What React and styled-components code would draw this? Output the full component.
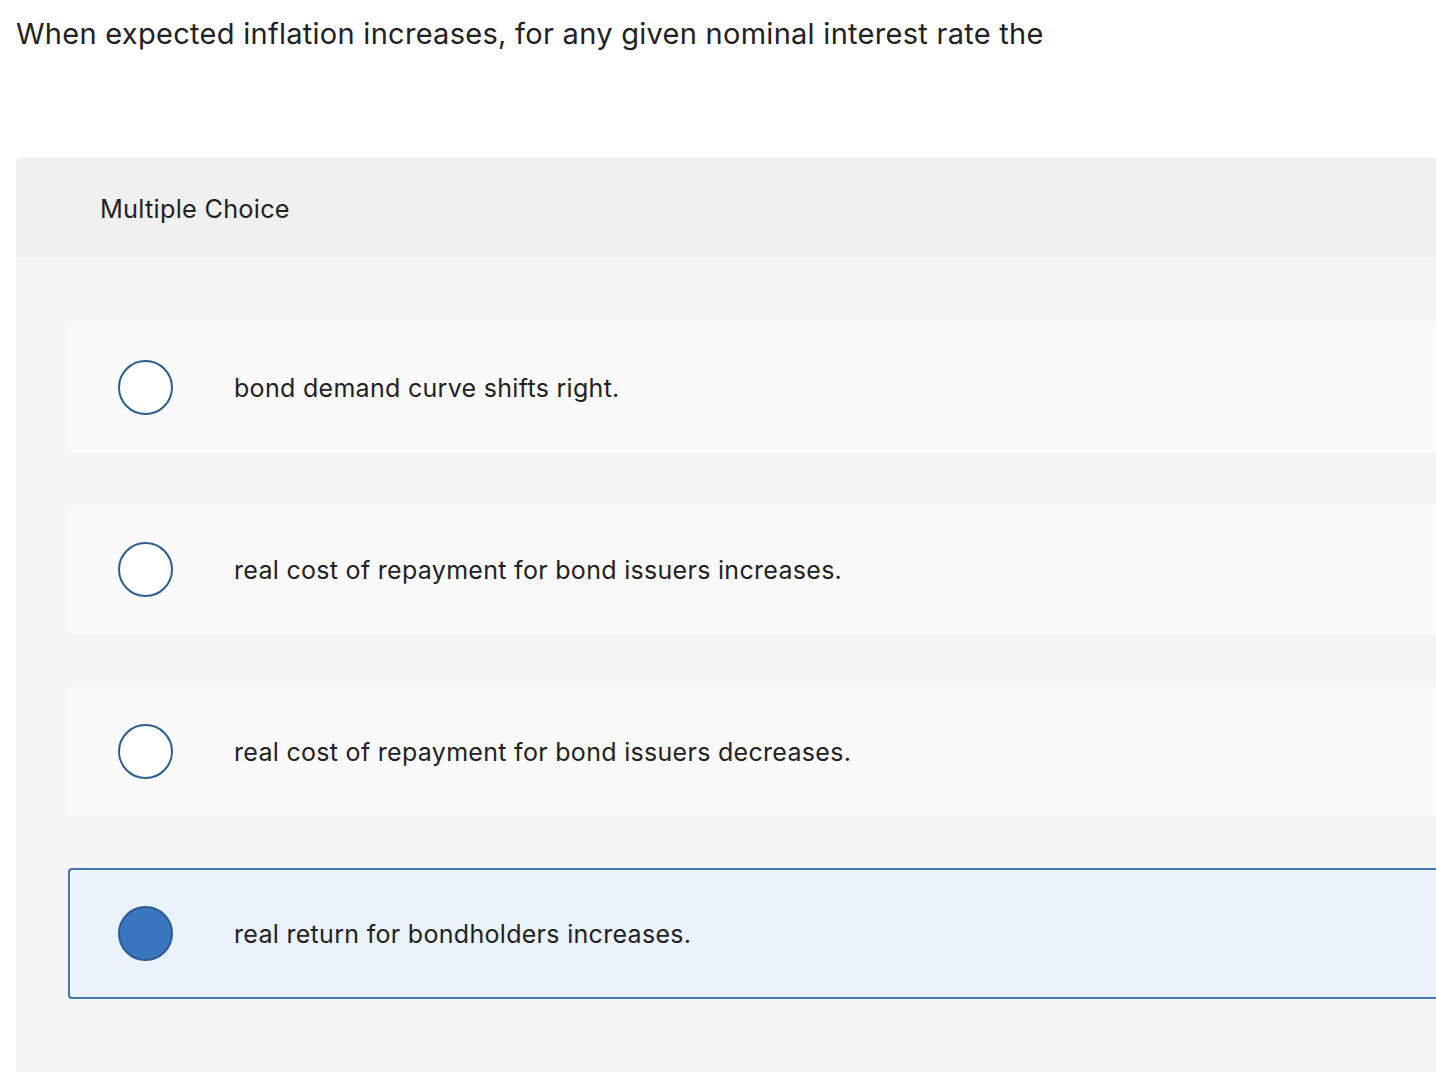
import styled, { createGlobalStyle } from 'styled-components';

const GlobalStyle = createGlobalStyle`
  html, body {
    margin: 0;
    padding: 0;
    background: #ffffff;
    overflow: hidden;
  }
  body {
    font-family: Inter, Lato, Arial, sans-serif;
    color: #1f1f1f;
  }
`;

const options = [
  { id: 'a', text: 'bond demand curve shifts right.' },
  { id: 'b', text: 'real cost of repayment for bond issuers increases.' },
  { id: 'c', text: 'real cost of repayment for bond issuers decreases.' },
  { id: 'd', text: 'real return for bondholders increases.', selected: true },
];

const App = () => {
  return (
    <Page>
      <GlobalStyle />
      <Question>When expected inflation increases, for any given nominal interest rate the</Question>
      <Panel>
        <PanelHeader>Multiple Choice</PanelHeader>
        <OptionList>
          {options.map((o) => (
            <Option key={o.id} selected={o.selected ? 1 : 0}>
              <Radio selected={o.selected ? 1 : 0} />
              <OptionText>{o.text}</OptionText>
            </Option>
          ))}
        </OptionList>
      </Panel>
    </Page>
  );
};

const Page = styled.div`
  width: 1436px;
  height: 1072px;
  overflow: hidden;
  padding: 0 0 0 16px;
  box-sizing: border-box;
  display: flex;
  flex-direction: column;
`;

const Question = styled.p`
  margin: 0;
  padding-top: 14px;
  height: 158px;
  flex-shrink: 0;
  box-sizing: border-box;
  font-size: 29px;
  letter-spacing: 0.28px;
  line-height: 40px;
  color: #222222;
`;

const Panel = styled.div`
  width: 1600px;
  flex: 1;
  background: #f5f5f5;
  border-top-left-radius: 4px;
`;

const PanelHeader = styled.div`
  height: 100px;
  display: flex;
  align-items: center;
  padding-left: 84px;
  background: #f0f0f0;
  border-top-left-radius: 4px;
  font-size: 25.3px;
  letter-spacing: 0.25px;
  color: #222222;
`;

const OptionList = styled.div`
  display: flex;
  flex-direction: column;
  gap: 51px;
  padding: 64px 0 0 52px;
`;

const Option = styled.div`
  height: 131px;
  box-sizing: border-box;
  display: flex;
  align-items: center;
  padding-left: ${({ selected }) => selected ? '48px' : '49px'};
  background: ${({ selected }) => selected ? '#eaf2fb' : '#fafafa'};
  border: ${({ selected }) => selected ? '2px solid #3f76b3' : '1px solid #f8f8f8'};
  border-radius: 4px;
`;

const Radio = styled.span`
  width: 55px;
  height: 55px;
  box-sizing: border-box;
  border-radius: 50%;
  flex-shrink: 0;
  border: 2px solid ${({ selected }) => selected ? '#2a5a92' : '#2d5d90'};
  background: ${({ selected }) => selected ? '#3a76bd' : '#ffffff'};
`;

const OptionText = styled.span`
  margin-left: 61px;
  font-size: 25px;
  letter-spacing: 0.3px;
  color: #222222;
`;

export default App;
